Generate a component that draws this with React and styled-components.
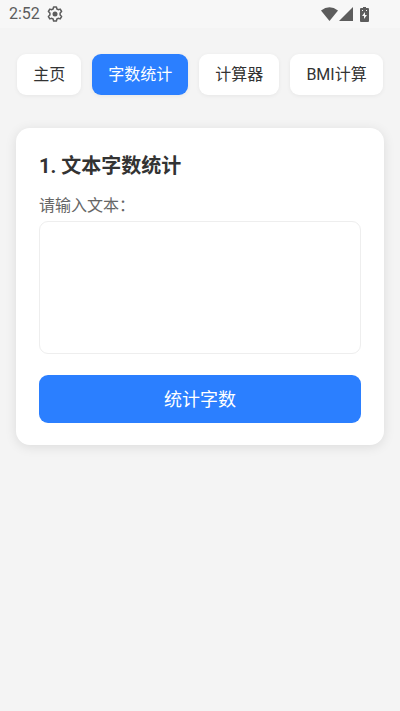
import React, { useState } from 'react';
import styled, { createGlobalStyle } from 'styled-components';

const GlobalStyle = createGlobalStyle`
  * { box-sizing: border-box; }
  body {
    margin: 0;
    background: #f4f4f4;
    color: #333;
    font-family: Roboto, "Noto Sans CJK SC", sans-serif;
  }
  button, textarea { font-family: inherit; }
`;

const StatusBar = styled.header`
  display: flex;
  align-items: center;
  justify-content: space-between;
  height: 28px;
  padding: 0 31px 0 9px;
  background: #f7f7f7;
  color: #5c5c5c;
  font-size: 16px;
  line-height: 28px;
`;

const StatusGroup = styled.div`
  display: flex;
  align-items: center;
  gap: ${({ $gap }) => $gap}px;
`;

const Main = styled.main`
  padding: 26px 16px;
`;

const Tabs = styled.nav`
  display: flex;
  justify-content: center;
  gap: 11px;
  margin-bottom: 33px;
`;

const Tab = styled.button`
  height: 41px;
  padding: 0 16px 3px;
  border: 0;
  border-radius: 9px;
  background: ${({ $active }) => ($active ? '#2b7fff' : '#fff')};
  color: ${({ $active }) => ($active ? '#fff' : '#333')};
  font-size: 16px;
  white-space: nowrap;
  box-shadow: 0 1px 4px rgba(0, 0, 0, 0.06);
`;

const Card = styled.section`
  padding: 23px 23px 22px;
  border-radius: 14px;
  background: #fff;
  box-shadow: 0 2px 12px rgba(0, 0, 0, 0.1);
`;

const Title = styled.h2`
  margin: 0 0 13px;
  font-size: 20px;
  line-height: 30px;
  font-weight: 700;
`;

const Label = styled.label`
  display: block;
  color: #666;
  font-size: 16px;
  line-height: 24px;
  margin-bottom: 3px;
`;

const TextArea = styled.textarea`
  display: block;
  width: 100%;
  height: 133px;
  padding: 12px;
  border: 1px solid #eee;
  border-radius: 9px;
  background: #fff;
  font-size: 16px;
  resize: none;
`;

const Submit = styled.button`
  display: block;
  width: 100%;
  height: 48px;
  margin-top: 21px;
  padding: 0 0 2px;
  border: 0;
  border-radius: 9px;
  background: #2b7fff;
  color: #fff;
  font-size: 18px;
`;

const GearIcon = () => (
  <svg width="16" height="16" viewBox="0 0 16 16" fill="none" stroke="#5c5c5c" aria-hidden="true">
    <path strokeWidth="1.5" strokeLinejoin="round" d="M6.6 1h2.8l.5 2 1.3.7 2-.6 1.4 2.4L13.1 7v2l1.5 1.5-1.4 2.4-2-.6-1.3.7-.5 2H6.6l-.5-2-1.3-.7-2 .6-1.4-2.4L2.900 9V7L1.400 5.500l1.400-2.400 2 .6L6.100 3Z" />
    <circle cx="8" cy="8" r="2.5" fill="#5c5c5c" stroke="none" />
  </svg>
);

const WifiIcon = () => (
  <svg width="17" height="14" viewBox="0 0 17 14" fill="#5c5c5c" aria-hidden="true">
    <path d="M8.5 14 0 3.500Q8.500-3 17 3.500Z" />
  </svg>
);

const SignalIcon = () => (
  <svg width="14" height="14" viewBox="0 0 14 14" fill="#5c5c5c" aria-hidden="true">
    <path d="M14 0v14H0Z" />
  </svg>
);

const BatterySlot = styled.span`
  display: flex;
  margin-left: 6px;
`;

const BatteryIcon = () => (
  <svg width="9" height="15" viewBox="0 0 9 15" fill="#5c5c5c" aria-hidden="true">
    <path d="M3 0h3v1h2q1 0 1 1v12q0 1-1 1H1q-1 0-1-1V2q0-1 1-1h2Z" />
    <path fill="#f7f7f7" d="M5 5 2 9h2v3l3-4H5ZM2 3h1v1H2ZM6 3h1v1H6Z" />
  </svg>
);

const TABS = ['主页', '字数统计', '计算器', 'BMI计算'];

export default function App() {
  const [active, setActive] = useState('字数统计');
  const [text, setText] = useState('');
  return (
    <>
      <GlobalStyle />
      <StatusBar>
        <StatusGroup $gap={7}>
          <span>2:52</span>
          <GearIcon />
        </StatusGroup>
        <StatusGroup $gap={1}>
          <WifiIcon />
          <SignalIcon />
          <BatterySlot>
            <BatteryIcon />
          </BatterySlot>
        </StatusGroup>
      </StatusBar>
      <Main>
        <Tabs>
          {TABS.map((name) => (
            <Tab key={name} type="button" $active={name === active} onClick={() => setActive(name)}>
              {name}
            </Tab>
          ))}
        </Tabs>
        <Card>
          <Title>1. 文本字数统计</Title>
          <Label htmlFor="source-text">请输入文本：</Label>
          <TextArea id="source-text" value={text} onChange={(e) => setText(e.target.value)} />
          <Submit type="button">统计字数</Submit>
        </Card>
      </Main>
    </>
  );
}
